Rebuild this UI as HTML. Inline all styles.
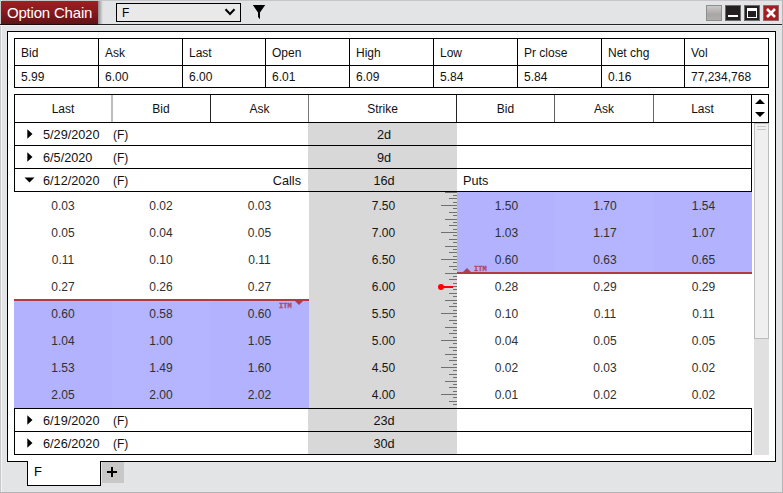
<!DOCTYPE html>
<html><head><meta charset="utf-8"><title>Option Chain</title>
<style>
*{box-sizing:border-box;margin:0;padding:0}
html,body{width:783px;height:493px;overflow:hidden}
body{background:#e3e4e6;font-family:"Liberation Sans",sans-serif;font-size:12px;color:#000;position:relative}
.abs,.abs *{position:absolute}
div{position:absolute}
.t{white-space:nowrap;line-height:1}
.hl{background:#000;height:1px}
.vl{background:#000;width:1px}
.c{text-align:center;color:#303030;font-size:12px;line-height:27px;height:27px;white-space:nowrap}
.g{font-size:12.7px;line-height:23px;height:23px;white-space:nowrap;color:#111}
.q{font-size:12px;white-space:nowrap;color:#111}
.h{font-size:12px;text-align:center;line-height:27px;height:27px;color:#111}
</style></head><body>

<div style="left:0;top:0;width:783px;height:1px;background:#c6c6c8"></div>
<div style="left:0;top:0;width:1px;height:493px;background:#c9c9cb"></div>
<div style="left:1px;top:0;width:1px;height:493px;background:#f4f4f5"></div>
<div style="left:782px;top:0;width:1px;height:493px;background:#b4b4b6"></div>
<div style="left:0;top:492px;width:783px;height:1px;background:#b4b4b6"></div>
<div style="left:0;top:24px;width:782px;height:1px;background:#242424"></div>
<div style="left:0;top:25px;width:782px;height:1px;background:#efeff1"></div>
<div style="left:98px;top:1px;width:5px;height:23px;background:linear-gradient(90deg,rgba(0,0,0,.38),rgba(0,0,0,0))"></div>
<div style="left:1px;top:1px;width:97px;height:23px;background:linear-gradient(#a21d23,#8a191e 45%,#621216)"></div>
<div style="left:1px;top:24px;width:97px;height:1px;background:#1c0a0b"></div>
<div class="t" style="left:7px;top:5px;font-size:15px;letter-spacing:-0.2px;color:#fff">Option Chain</div>
<div style="left:116px;top:3px;width:125px;height:19px;border:1px solid #000;background:#e9e9ea"></div>
<div class="t" style="left:122px;top:7px;font-size:12px">F</div>
<svg style="position:absolute;left:224px;top:8px" width="12" height="8" viewBox="0 0 12 8"><path d="M1.5 1.2 L6 6 L10.5 1.2" fill="none" stroke="#000" stroke-width="2"/></svg>
<svg style="position:absolute;left:252px;top:4px" width="14" height="16" viewBox="0 0 14 16"><path d="M0.8 1 H13.2 L8 8.5 V15.2 L6 13 V8.5 Z" fill="#000"/></svg>
<div style="left:706px;top:5px;width:16px;height:16px;background:linear-gradient(#cbc9c9,#a9a5a5 60%,#b0adad);border:1px solid #8e8e8e"></div>
<div style="left:725px;top:5px;width:16px;height:16px;background:#231f20;border:1px solid #6a6a6a"></div>
<div style="left:728px;top:15px;width:10px;height:2px;background:#fff"></div>
<div style="left:744px;top:5px;width:16px;height:16px;background:#231f20;border:1px solid #6a6a6a"></div>
<div style="left:747px;top:8px;width:10px;height:10px;border:1px solid #fff;border-top:3px solid #fff"></div>
<div style="left:763px;top:5px;width:16px;height:16px;background:#a51d21;border:1px solid #8a6a6a"></div>
<svg style="position:absolute;left:763px;top:5px" width="16" height="16" viewBox="0 0 16 16"><path d="M4 4 L12 12 M12 4 L4 12" stroke="#fff" stroke-width="2.6"/></svg>
<div style="left:7px;top:31px;width:769px;height:431px;background:#fff;border:1px solid #000"></div>
<div style="left:14px;top:38px;width:755px;height:50px;border:1px solid #000"></div>
<div class="hl" style="left:14px;top:65px;width:755px"></div>
<div class="t q" style="left:21px;top:47px">Bid</div>
<div class="t q" style="left:21px;top:71px">5.99</div>
<div class="vl" style="left:98px;top:38px;height:50px"></div>
<div class="t q" style="left:105px;top:47px">Ask</div>
<div class="t q" style="left:105px;top:71px">6.00</div>
<div class="vl" style="left:182px;top:38px;height:50px"></div>
<div class="t q" style="left:189px;top:47px">Last</div>
<div class="t q" style="left:189px;top:71px">6.00</div>
<div class="vl" style="left:265px;top:38px;height:50px"></div>
<div class="t q" style="left:272px;top:47px">Open</div>
<div class="t q" style="left:272px;top:71px">6.01</div>
<div class="vl" style="left:349px;top:38px;height:50px"></div>
<div class="t q" style="left:356px;top:47px">High</div>
<div class="t q" style="left:356px;top:71px">6.09</div>
<div class="vl" style="left:433px;top:38px;height:50px"></div>
<div class="t q" style="left:440px;top:47px">Low</div>
<div class="t q" style="left:440px;top:71px">5.84</div>
<div class="vl" style="left:517px;top:38px;height:50px"></div>
<div class="t q" style="left:524px;top:47px">Pr close</div>
<div class="t q" style="left:524px;top:71px">5.84</div>
<div class="vl" style="left:601px;top:38px;height:50px"></div>
<div class="t q" style="left:608px;top:47px">Net chg</div>
<div class="t q" style="left:608px;top:71px">0.16</div>
<div class="vl" style="left:684px;top:38px;height:50px"></div>
<div class="t q" style="left:691px;top:47px">Vol</div>
<div class="t q" style="left:691px;top:71px">77,234,768</div>
<div style="left:14px;top:94px;width:755px;height:29px;border:1px solid #000"></div>
<div style="left:308px;top:123px;width:149px;height:332px;background:#d8d8d8"></div>
<div style="left:308px;top:192px;width:1px;height:216px;background:#fff"></div>
<div class="h" style="left:14px;top:96px;width:98px">Last</div>
<div class="h" style="left:111px;top:96px;width:100px">Bid</div>
<div class="vl" style="left:111px;top:95px;height:27px;width:2px;background:#bdbdbd"></div>
<div class="h" style="left:210px;top:96px;width:99px">Ask</div>
<div class="vl" style="left:210px;top:95px;height:27px;width:1px;background:#222"></div>
<div class="h" style="left:308px;top:96px;width:149px">Strike</div>
<div class="vl" style="left:308px;top:95px;height:27px;width:1px;background:#777"></div>
<div class="h" style="left:456px;top:96px;width:99px">Bid</div>
<div class="vl" style="left:456px;top:95px;height:27px;width:1px;background:#222"></div>
<div class="h" style="left:554px;top:96px;width:100px">Ask</div>
<div class="vl" style="left:554px;top:95px;height:27px;width:1px;background:#606060"></div>
<div class="h" style="left:653px;top:96px;width:99px">Last</div>
<div class="vl" style="left:653px;top:95px;height:27px;width:1px;background:#666"></div>
<div class="vl" style="left:751px;top:94px;height:29px"></div>
<svg style="position:absolute;left:752px;top:95px" width="16" height="27" viewBox="0 0 16 27"><path d="M8 4 L13 9 H3 Z M8 22 L13 17 H3 Z" fill="#000"/></svg>
<div style="left:457px;top:192px;width:295px;height:81px;background:#b2b2ff"></div>
<div style="left:14px;top:300px;width:295px;height:108px;background:#b2b2ff"></div>
<div style="left:555px;top:192px;width:98px;height:81px;background:rgba(255,255,255,.035)"></div>
<div style="left:112px;top:300px;width:98px;height:108px;background:rgba(255,255,255,.035)"></div>
<div style="left:14px;top:122px;width:738px;height:24px;border:1px solid #000"></div>
<svg style="position:absolute;left:27px;top:129px" width="6" height="10" viewBox="0 0 6 10"><path d="M0.3 0.3 L5.5 5 L0.3 9.7 Z" fill="#000"/></svg>
<div class="g" style="left:43px;top:124px">5/29/2020</div>
<div class="g" style="left:113px;top:124px;font-size:12px">(F)</div>
<div class="g" style="left:310px;top:124px;width:148px;text-align:center">2d</div>
<div style="left:14px;top:145px;width:738px;height:24px;border:1px solid #000"></div>
<svg style="position:absolute;left:27px;top:152px" width="6" height="10" viewBox="0 0 6 10"><path d="M0.3 0.3 L5.5 5 L0.3 9.7 Z" fill="#000"/></svg>
<div class="g" style="left:43px;top:147px">6/5/2020</div>
<div class="g" style="left:113px;top:147px;font-size:12px">(F)</div>
<div class="g" style="left:310px;top:147px;width:148px;text-align:center">9d</div>
<div style="left:14px;top:168px;width:738px;height:24px;border:1px solid #000"></div>
<svg style="position:absolute;left:24px;top:177px" width="11" height="6" viewBox="0 0 11 6"><path d="M0.5 0.5 H10.5 L5.5 5.5 Z" fill="#000"/></svg>
<div class="g" style="left:43px;top:170px">6/12/2020</div>
<div class="g" style="left:113px;top:170px;font-size:12px">(F)</div>
<div class="g" style="left:310px;top:170px;width:148px;text-align:center">16d</div>
<div class="g" style="left:200px;top:170px;width:101px;text-align:right">Calls</div>
<div class="g" style="left:463px;top:170px">Puts</div>
<div style="left:14px;top:408px;width:738px;height:24px;border:1px solid #000"></div>
<svg style="position:absolute;left:27px;top:415px" width="6" height="10" viewBox="0 0 6 10"><path d="M0.3 0.3 L5.5 5 L0.3 9.7 Z" fill="#000"/></svg>
<div class="g" style="left:43px;top:410px">6/19/2020</div>
<div class="g" style="left:113px;top:410px;font-size:12px">(F)</div>
<div class="g" style="left:310px;top:410px;width:148px;text-align:center">23d</div>
<div style="left:14px;top:431px;width:738px;height:24px;border:1px solid #000"></div>
<svg style="position:absolute;left:27px;top:438px" width="6" height="10" viewBox="0 0 6 10"><path d="M0.3 0.3 L5.5 5 L0.3 9.7 Z" fill="#000"/></svg>
<div class="g" style="left:43px;top:433px">6/26/2020</div>
<div class="g" style="left:113px;top:433px;font-size:12px">(F)</div>
<div class="g" style="left:310px;top:433px;width:148px;text-align:center">30d</div>
<div class="c" style="left:14px;top:193px;width:98px">0.03</div>
<div class="c" style="left:111px;top:193px;width:100px">0.02</div>
<div class="c" style="left:210px;top:193px;width:99px">0.03</div>
<div class="c" style="left:309px;top:193px;width:149px;color:#161616">7.50</div>
<div class="c" style="left:457px;top:193px;width:99px">1.50</div>
<div class="c" style="left:555px;top:193px;width:100px">1.70</div>
<div class="c" style="left:654px;top:193px;width:99px">1.54</div>
<div class="c" style="left:14px;top:220px;width:98px">0.05</div>
<div class="c" style="left:111px;top:220px;width:100px">0.04</div>
<div class="c" style="left:210px;top:220px;width:99px">0.05</div>
<div class="c" style="left:309px;top:220px;width:149px;color:#161616">7.00</div>
<div class="c" style="left:457px;top:220px;width:99px">1.03</div>
<div class="c" style="left:555px;top:220px;width:100px">1.17</div>
<div class="c" style="left:654px;top:220px;width:99px">1.07</div>
<div class="c" style="left:14px;top:247px;width:98px">0.11</div>
<div class="c" style="left:111px;top:247px;width:100px">0.10</div>
<div class="c" style="left:210px;top:247px;width:99px">0.11</div>
<div class="c" style="left:309px;top:247px;width:149px;color:#161616">6.50</div>
<div class="c" style="left:457px;top:247px;width:99px">0.60</div>
<div class="c" style="left:555px;top:247px;width:100px">0.63</div>
<div class="c" style="left:654px;top:247px;width:99px">0.65</div>
<div class="c" style="left:14px;top:274px;width:98px">0.27</div>
<div class="c" style="left:111px;top:274px;width:100px">0.26</div>
<div class="c" style="left:210px;top:274px;width:99px">0.27</div>
<div class="c" style="left:309px;top:274px;width:149px;color:#161616">6.00</div>
<div class="c" style="left:457px;top:274px;width:99px">0.28</div>
<div class="c" style="left:555px;top:274px;width:100px">0.29</div>
<div class="c" style="left:654px;top:274px;width:99px">0.29</div>
<div class="c" style="left:14px;top:301px;width:98px">0.60</div>
<div class="c" style="left:111px;top:301px;width:100px">0.58</div>
<div class="c" style="left:210px;top:301px;width:99px">0.60</div>
<div class="c" style="left:309px;top:301px;width:149px;color:#161616">5.50</div>
<div class="c" style="left:457px;top:301px;width:99px">0.10</div>
<div class="c" style="left:555px;top:301px;width:100px">0.11</div>
<div class="c" style="left:654px;top:301px;width:99px">0.11</div>
<div class="c" style="left:14px;top:328px;width:98px">1.04</div>
<div class="c" style="left:111px;top:328px;width:100px">1.00</div>
<div class="c" style="left:210px;top:328px;width:99px">1.05</div>
<div class="c" style="left:309px;top:328px;width:149px;color:#161616">5.00</div>
<div class="c" style="left:457px;top:328px;width:99px">0.04</div>
<div class="c" style="left:555px;top:328px;width:100px">0.05</div>
<div class="c" style="left:654px;top:328px;width:99px">0.05</div>
<div class="c" style="left:14px;top:355px;width:98px">1.53</div>
<div class="c" style="left:111px;top:355px;width:100px">1.49</div>
<div class="c" style="left:210px;top:355px;width:99px">1.60</div>
<div class="c" style="left:309px;top:355px;width:149px;color:#161616">4.50</div>
<div class="c" style="left:457px;top:355px;width:99px">0.02</div>
<div class="c" style="left:555px;top:355px;width:100px">0.03</div>
<div class="c" style="left:654px;top:355px;width:99px">0.02</div>
<div class="c" style="left:14px;top:382px;width:98px">2.05</div>
<div class="c" style="left:111px;top:382px;width:100px">2.00</div>
<div class="c" style="left:210px;top:382px;width:99px">2.02</div>
<div class="c" style="left:309px;top:382px;width:149px;color:#161616">4.00</div>
<div class="c" style="left:457px;top:382px;width:99px">0.01</div>
<div class="c" style="left:555px;top:382px;width:100px">0.02</div>
<div class="c" style="left:654px;top:382px;width:99px">0.02</div>
<svg style="position:absolute;left:0;top:0" width="783" height="493" viewBox="0 0 783 493" shape-rendering="crispEdges"><path d="M445 192.5H457M453 195.5H457M449 198.5H457M453 202.5H457M441 205.5H457M453 208.5H457M449 212.5H457M453 215.5H457M445 219.5H457M453 222.5H457M449 225.5H457M453 229.5H457M441 232.5H457M453 235.5H457M449 239.5H457M453 242.5H457M445 246.5H457M453 249.5H457M449 252.5H457M453 256.5H457M441 259.5H457M453 262.5H457M449 266.5H457M453 269.5H457M445 273.5H457M453 276.5H457M449 279.5H457M453 283.5H457M441 286.5H457M453 289.5H457M449 293.5H457M453 296.5H457M445 300.5H457M453 303.5H457M449 306.5H457M453 310.5H457M441 313.5H457M453 316.5H457M449 320.5H457M453 323.5H457M445 327.5H457M453 330.5H457M449 333.5H457M453 337.5H457M441 340.5H457M453 343.5H457M449 347.5H457M453 350.5H457M445 354.5H457M453 357.5H457M449 360.5H457M453 364.5H457M441 367.5H457M453 370.5H457M449 374.5H457M453 377.5H457M445 381.5H457M453 384.5H457M449 387.5H457M453 391.5H457M441 394.5H457M453 397.5H457M449 401.5H457M453 404.5H457" stroke="#707070" stroke-width="1" fill="none"/></svg>
<div style="left:457px;top:272px;width:295px;height:2px;background:#b23a44"></div>
<div style="left:14px;top:299px;width:295px;height:2px;background:#b23a44"></div>
<svg style="position:absolute;left:463px;top:268px" width="8" height="4" viewBox="0 0 8 4"><path d="M0 4 L4 0 L8 4Z" fill="#aa3e56"/></svg>
<svg style="position:absolute;left:295px;top:301px" width="8" height="4" viewBox="0 0 8 4"><path d="M0 0 L4 4 L8 0Z" fill="#aa3e56"/></svg>
<div class="t" style="left:474px;top:266px;font-family:'Liberation Mono',monospace;font-weight:bold;font-size:7px;color:#b04a70;-webkit-text-stroke:0.3px #b04a70">ITM</div>
<div class="t" style="left:279px;top:303px;font-family:'Liberation Mono',monospace;font-weight:bold;font-size:7px;color:#b04a70;-webkit-text-stroke:0.3px #b04a70">ITM</div>
<div style="left:441px;top:286px;width:12px;height:2px;background:#f00"></div>
<div style="left:438px;top:284px;width:6px;height:6px;border-radius:3px;background:#f00"></div>
<div style="left:754px;top:123px;width:15px;height:332px;background:#e0e0e0"></div>
<div style="left:754px;top:123px;width:15px;height:216px;background:#efefef;border:1px solid #bdbdbd"></div>
<div style="left:757px;top:126px;width:9px;height:1px;background:#c8c8c8"></div>
<div style="left:757px;top:129px;width:9px;height:1px;background:#c8c8c8"></div>
<div style="left:27px;top:461px;width:74px;height:25px;background:#fff;border:1px solid #000;border-top:none"></div>
<div style="left:28px;top:461px;width:72px;height:1px;background:#fff"></div>
<div class="t" style="left:34px;top:465px;font-size:13px">F</div>
<div style="left:102px;top:462px;width:22px;height:21px;background:#c8c8c8"></div>
<div style="left:107px;top:471px;width:10px;height:2px;background:#000"></div>
<div style="left:111px;top:467px;width:2px;height:10px;background:#000"></div>
</body></html>
